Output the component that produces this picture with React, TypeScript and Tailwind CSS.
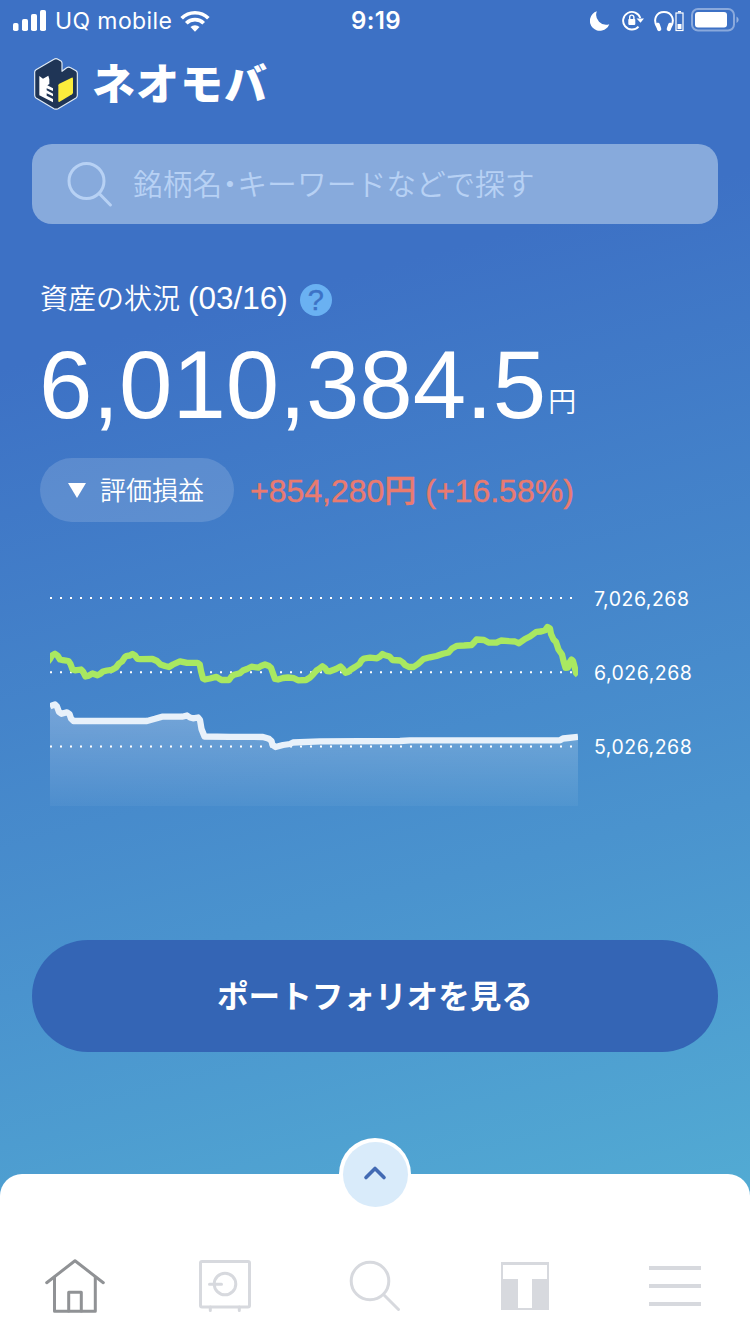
import { ReactNode } from "react";

const GREEN_LINE =
  "46,664 50,659 52,655.5 55,653.8 57.5,655.5 60,659.5 63,660.2 68.5,661 70.5,664 72.5,669.5 75,670.3 81,669.5 83,671.5 85.5,676.5 88,676 92.5,673.5 97.5,675.3 100,674 103,671.5 107,670.5 112,669.8 116,667.5 119,663.5 122,661.5 125,657 127,655.8 130,655.5 132.5,654 135,655.5 137.5,658.8 140,659.2 152.5,659 157,661 160.5,664.5 165,666 169,667 173,664.5 180,661.3 187,662.8 197.5,662.8 199.8,664.5 201,671 203,678.5 205,679.5 210,678.5 216.5,676.8 219,678.5 221.5,680 229,680 231.5,676.5 234,674.8 240,673.2 243,670.5 247,669 251.5,666.7 258.5,667.7 261,666 265,664.5 269,666 271,667.8 272.5,672 275,679 278,679.5 283,678 288,677.5 294,678.2 298,680.3 306,680 310,677.5 313,674.5 316.5,670.5 319,669 322.5,666.3 325,668 327,671 330,671.3 336,669 340.5,666.5 343,669 345.5,672.8 348,672 351,669.5 355,667 359.5,664 361.5,660.5 364,658.5 370,657.6 377,658.3 380,656.5 382.5,654 385,655.3 389.5,656.5 392.5,660 400,660.5 403,662.5 405,665 409,667 413.5,667 418,664 423.5,659 430,657.3 436.5,656 443,653.8 448.5,652.5 452,648.5 457,645.8 464,645.5 471.5,645 474,642.5 476.5,639.5 484,640 488.5,642.5 496.5,642.7 501,640.5 509,641.2 515,641.5 519,643.3 525,639 530,636.5 536.5,631.8 541,631.5 545,630.3 547.5,627 550,628.5 551,634 553.5,639.5 556,642 558.5,649.5 562,654.5 563.5,661 565.5,667.8 568,667.5 569.5,662.5 571.5,659.5 573,661 575,668.5 576,673 578,675";

const WHITE_LINE =
  "50,706.5 52,705.5 55,704.5 57,706.5 59,712 61.5,713.8 67,712.3 69.5,714 71,718.5 73.5,721 147,721 155,718.8 162,716.7 182,716.7 187,715.5 190,717.5 193,718.3 198,717.5 200,720 201.5,729 204.5,736.5 230,736.8 263,737 269,738.8 271.5,741 272.5,745 275.5,747 283,745 290,744 293,742.5 320,741.3 400,741 410,740.3 560,740.3 563,738.5 568,738 578,736.8";

function StatusBar() {
  return (
    <div className="grid h-[41px] grid-cols-[1fr_auto_1fr] items-center pr-[11px] pl-[13px] font-['Inter',sans-serif] text-2xl text-white">
      <div className="flex items-center">
        <svg width="34" height="22" viewBox="0 0 34 22" fill="white">
          <rect x="0" y="13" width="5.5" height="8" rx="1.8" />
          <rect x="9" y="9" width="6" height="12" rx="1.8" />
          <rect x="18" y="4" width="6" height="17" rx="1.8" />
          <rect x="27" y="0" width="6" height="21" rx="1.8" />
        </svg>
        <span className="mt-px ml-2 text-[23px] tracking-[0.4px]">UQ mobile</span>
        <svg className="ml-2" width="30" height="22" viewBox="0 0 31 22" fill="none" stroke="white" strokeWidth="3.8">
          <path d="M1.7 8.2A19.5 19.5 0 0 1 29.3 8.2" />
          <path d="M6.5 13.4A12.7 12.7 0 0 1 24.5 13.4" />
          <path d="M15.5 22L10.8 17.3A6.6 6.6 0 0 1 20.2 17.3Z" fill="white" stroke="none" />
        </svg>
      </div>
      <span className="font-semibold tracking-[0.4px]">9:19</span>
      <div className="flex items-center justify-end">
        <svg width="20" height="22" viewBox="0 0 20 22" fill="white">
          <path d="M6.8 1.3A10 10 0 1 0 19.3 14.2A10 10 0 0 1 6.8 1.3Z" />
        </svg>
        <svg className="ml-3" width="22" height="22" viewBox="0 0 22 22" fill="none" stroke="white" strokeWidth="1.9">
          <path d="M16.5 16.6A8.8 8.8 0 1 1 18.3 8" />
          <path d="M14.5 8.4H22L18.5 12.8Z" fill="white" stroke="none" />
          <rect x="6.3" y="8.9" width="7" height="6" rx="0.8" fill="white" stroke="none" />
          <path d="M7.7 9.2V7.2A2.1 2.1 0 0 1 11.9 7.2V9.2" strokeWidth="1.4" />
        </svg>
        <svg className="ml-2.5" width="20" height="22" viewBox="0 0 20 22" fill="none" stroke="white" strokeWidth="2">
          <path d="M3.2 17C-1.5 9.5 2.5 2 10 2S21.5 9.5 16.8 17" />
          <path d="M3.8 14.8L5.2 19M16.2 14.8L14.8 19" strokeWidth="4.2" strokeLinecap="round" />
        </svg>
        <svg className="ml-px" width="9" height="22" viewBox="0 0 9 22" fill="none" stroke="white">
          <rect x="1" y="3" width="7" height="17.5" strokeWidth="1.2" />
          <rect x="3" y="1" width="3" height="1.5" fill="white" stroke="none" />
          <rect x="2.5" y="14" width="4" height="5" fill="white" stroke="none" />
        </svg>
        <svg className="-mt-px ml-[7px]" width="48" height="24" viewBox="0 0 48 24" fill="none">
          <rect x="1" y="1" width="42" height="21.5" rx="6" stroke="white" strokeOpacity="0.4" strokeWidth="2" />
          <rect x="4" y="4" width="32" height="15.5" rx="3" fill="white" />
          <path d="M45.5 8.5C48.3 10 48.3 13.5 45.5 15Z" fill="white" fillOpacity="0.45" />
        </svg>
      </div>
    </div>
  );
}

function Logo() {
  return (
    <div className="flex h-[56px] items-center pl-[34px]">
      <svg width="44" height="52" viewBox="0 0 132 156">
        <path d="M2 42Q2 38 6 35L60 4Q66 0 72 4L82 10Q84 12 84 16V40L98 29Q104 26 110 29L126 38Q130 41 130 46V112Q130 117 126 120L72 152Q66 155 60 152L6 120Q2 117 2 112Z" fill="#1f3556" stroke="#dfeaf5" strokeWidth="3.5" strokeLinejoin="round" />
        <path d="M16 54L27 62L43 53L46 64V78L40 82L57 91V99L38 91V97L57 107V115L38 106V113L57 123V133L16 112Z" fill="white" />
        <path d="M73 82Q73 79 76 77L113 59Q117 58 117 62V103Q117 107 114 109L77 131Q73 133 73 129Z" fill="#fbed3c" />
      </svg>
      <span className="-mt-1.5 ml-[14px] font-['Noto_Sans_CJK_JP',sans-serif] text-[43px] font-black leading-none tracking-[1px] text-white">
        ネオモバ
      </span>
    </div>
  );
}

function Chart() {
  return (
    <div className="mt-[68px] flex pl-[50px]">
      <svg width="528" height="216" viewBox="50 590 528 216" fill="none">
        <defs>
          <linearGradient id="area" x1="0" y1="704" x2="0" y2="806" gradientUnits="userSpaceOnUse">
            <stop offset="0" stopColor="white" stopOpacity="0.27" />
            <stop offset="1" stopColor="white" stopOpacity="0.04" />
          </linearGradient>
        </defs>
        <polygon points={`${WHITE_LINE} 578,806 50,806`} fill="url(#area)" />
        {[598, 672.3, 746.5].map((y) => (
          <line key={y} x1="50" x2="578" y1={y} y2={y} stroke="white" strokeWidth="2" strokeDasharray="2 8" />
        ))}
        <polyline points={WHITE_LINE} stroke="#e8f1fa" strokeWidth="6.3" strokeLinejoin="round" />
        <polyline points={GREEN_LINE} stroke="#a9e861" strokeWidth="6.3" strokeLinejoin="round" />
      </svg>
      <div className="-mt-px ml-4 flex flex-col gap-[54px] font-['Inter',sans-serif] text-[19.5px] leading-5 tracking-[0.5px] text-white">
        <span>7,026,268</span>
        <span>6,026,268</span>
        <span>5,026,268</span>
      </div>
    </div>
  );
}

function NavIcon({ children, active = false }: { children: ReactNode; active?: boolean }) {
  return (
    <div className={active ? "flex justify-center text-[#909295]" : "flex justify-center text-[#d7d9de]"}>
      <svg width="60" height="60" viewBox="0 0 60 60" fill="none" stroke="currentColor" strokeWidth="3" strokeLinecap="round" strokeLinejoin="round">
        {children}
      </svg>
    </div>
  );
}

function BottomSheet() {
  return (
    <div className="relative mt-[122px] h-40 rounded-t-[22px] bg-white pt-[82px]">
      <div className="absolute -top-9 left-[339px] flex h-[72px] w-[72px] items-center justify-center rounded-full bg-white">
        <div className="flex h-[65px] w-[65px] items-center justify-center rounded-full bg-[#d9ebfa]">
          <svg className="-mt-0.5" width="24" height="16" viewBox="0 0 24 16" fill="none" stroke="#426ab3" strokeWidth="3.6" strokeLinecap="round" strokeLinejoin="round">
            <path d="M3 12.5L12 3.5L21 12.5" />
          </svg>
        </div>
      </div>
      <div className="grid grid-cols-5">
        <NavIcon active>
          <path d="M1.7 26.7L30 4.8L58.3 26.7" />
          <path d="M9.5 21V55.3H50.3V21" />
          <path d="M23.7 55V36.3H36.3V55" />
        </NavIcon>
        <NavIcon>
          <rect x="5.5" y="5.5" width="49" height="45.5" rx="1.5" />
          <circle cx="30" cy="28" r="10.8" />
          <path d="M14.5 28.3H26.5M15.3 51V54.5M44.3 51V54.5" />
        </NavIcon>
        <NavIcon>
          <circle cx="25" cy="25" r="18.8" />
          <path d="M39 39L53.5 53.5" />
        </NavIcon>
        <NavIcon>
          <path d="M6 6H54V54H6ZM8 9V23H23V52H37V23H52V9Z" fill="currentColor" fillRule="evenodd" stroke="none" />
        </NavIcon>
        <NavIcon>
          <path d="M4 12H56M4 30H56M4 48H56" strokeWidth="4" strokeLinecap="butt" />
        </NavIcon>
      </div>
    </div>
  );
}

export default function App() {
  return (
    <div className="h-[1334px] w-[750px] overflow-hidden bg-[linear-gradient(165deg,#3d71c5_0%,#3d71c5_24%,#4a93ce_65%,#52aad3_90%)] font-['Liberation_Sans','Noto_Sans_CJK_JP',sans-serif]">
      <StatusBar />
      <div className="pt-[15px]">
        <Logo />
      </div>

      <div className="mx-8 mt-8 flex h-20 items-center rounded-[20px] bg-[#87aadc] pl-[35px] text-[#b7d1f4]">
        <svg width="46" height="46" viewBox="0 0 46 46" fill="none" stroke="currentColor" strokeWidth="3" strokeLinecap="round">
          <circle cx="19.5" cy="20" r="17.5" />
          <path d="M32.2 32.5L43.4 44" />
        </svg>
        <span className="-mt-0.5 ml-5 font-['Noto_Sans_CJK_JP',sans-serif] text-[29.8px] font-[350] leading-none">
          銘柄名<span className="[font-feature-settings:'halt']">・</span>キーワードなどで探す
        </span>
      </div>

      <div className="px-10 pt-[58px]">
        <div className="flex h-9 items-center text-white">
          <span className="text-[28px] font-[350] leading-none">資産の状況</span>
          <span className="-mt-0.5 ml-2 text-[31.5px] leading-none">(03/16)</span>
          <span className="ml-3 flex h-8 w-8 items-center justify-center rounded-full bg-[#6ab1f2] text-[29px] leading-none text-[#3c72c6] [-webkit-text-stroke:0.4px_#3c72c6]">
            ?
          </span>
        </div>
        <div className="mt-[15px] flex h-[105px] items-baseline text-white">
          <span className="-ml-px text-[96px] leading-[104px]">6,010,384.5</span>
          <span className="relative -top-1.5 ml-0.5 text-[28px] font-[350] leading-none">円</span>
        </div>
        <div className="mt-5 flex h-16 items-center">
          <div className="flex h-16 w-[194px] items-center rounded-full bg-white/15 pl-7 text-white">
            <svg width="18" height="15" viewBox="0 0 18 15" fill="white">
              <path d="M0 0H18L9 15Z" />
            </svg>
            <span className="mt-0.5 ml-[14px] text-[26px] font-[350] leading-none">評価損益</span>
          </div>
          <span className="mt-0.5 ml-4 text-[32px] font-medium leading-none text-[#ea7a6f] [-webkit-text-stroke:0.4px_#ea7a6f]">+854,280円 (+16.58%)</span>
        </div>
      </div>

      <Chart />

      <button className="mx-8 mt-[134px] flex h-28 w-[686px] items-center justify-center rounded-full bg-[#3465b5] pb-0.5 font-['Noto_Sans_CJK_JP',sans-serif] text-[31.6px] font-bold leading-none text-white">
        ポートフォリオを見る
      </button>

      <BottomSheet />
    </div>
  );
}
